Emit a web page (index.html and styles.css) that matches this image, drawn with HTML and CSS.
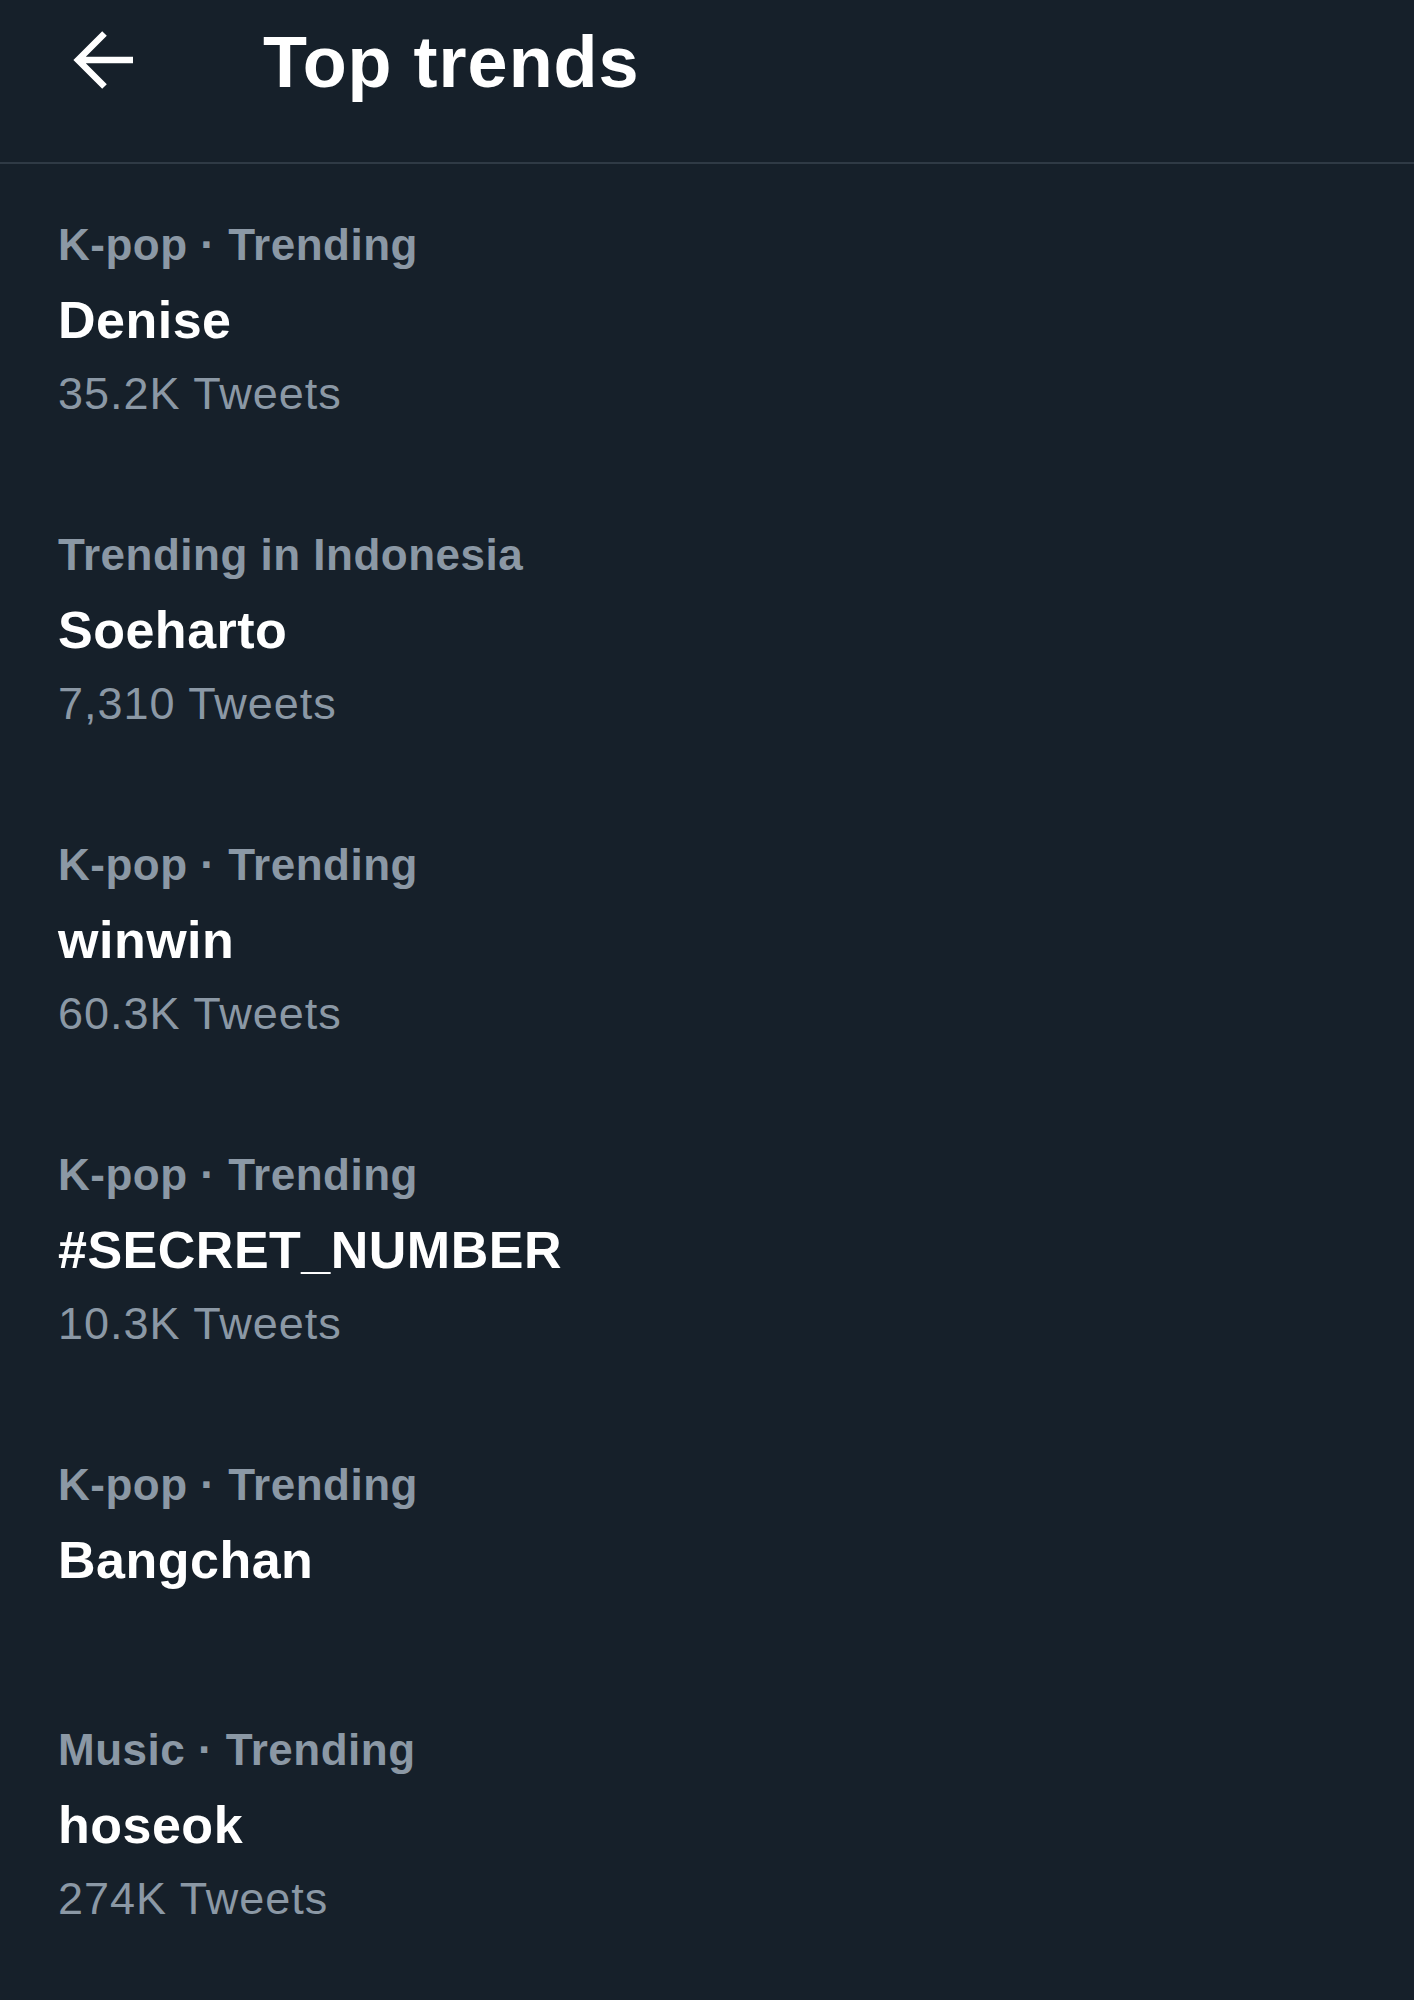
FILE: index.html
```html
<!DOCTYPE html>
<html>
<head>
  <meta charset="UTF-8">
  <title>Top trends</title>
  <link rel="stylesheet" href="styles.css">
</head>
<body>

  <header class="topbar">
    <a href="#" class="topbar__back" aria-label="Back">
      <svg width="66" height="64" viewBox="0 0 66 64">
        <path d="M63 32H8M34.5 5.5L8 32l26.5 26.5" fill="none" stroke="#fff" stroke-width="6.5" stroke-linejoin="miter"/>
      </svg>
    </a>
    <h1 class="topbar__title">Top trends</h1>
  </header>

  <div class="trends">
    <a href="#" class="trend">
      <div class="trend__meta">K-pop · Trending</div>
      <div class="trend__name">Denise</div>
      <div class="trend__count">35.2K Tweets</div>
    </a>
    <a href="#" class="trend">
      <div class="trend__meta">Trending in Indonesia</div>
      <div class="trend__name">Soeharto</div>
      <div class="trend__count">7,310 Tweets</div>
    </a>
    <a href="#" class="trend">
      <div class="trend__meta">K-pop · Trending</div>
      <div class="trend__name">winwin</div>
      <div class="trend__count">60.3K Tweets</div>
    </a>
    <a href="#" class="trend">
      <div class="trend__meta">K-pop · Trending</div>
      <div class="trend__name">#SECRET_NUMBER</div>
      <div class="trend__count">10.3K Tweets</div>
    </a>
    <a href="#" class="trend trend--short">
      <div class="trend__meta">K-pop · Trending</div>
      <div class="trend__name">Bangchan</div>
    </a>
    <a href="#" class="trend">
      <div class="trend__meta">Music · Trending</div>
      <div class="trend__name">hoseok</div>
      <div class="trend__count">274K Tweets</div>
    </a>
  </div>

</body>
</html>
```

FILE: styles.css
```css
body {
  margin: 0;
  min-height: 2000px;
  background: #16202a;
  color: #fff;
  font-family: "Liberation Sans", Arial, sans-serif;
}

.topbar {
  box-sizing: border-box;
  height: 164px;
  display: flex;
  align-items: flex-start;
  padding: 22px 0 0 70px;
  border-bottom: 2px solid #2f3a45;
}

.topbar__back {
  display: block;
  margin-top: 6px;
  line-height: 0;
}

.topbar__title {
  margin: 0 0 0 127px;
  font-size: 72px;
  line-height: 80px;
  font-weight: bold;
  letter-spacing: 1px;
}

.trend {
  display: block;
  padding: 51px 58px 50px;
  text-decoration: none;
  color: #fff;
}

.trend--short {
  padding-bottom: 70px;
}

.trend__meta {
  font-size: 44px;
  line-height: 60px;
  font-weight: bold;
  letter-spacing: 0.5px;
  color: #8b98a5;
}

.trend__name {
  margin-top: 6px;
  font-size: 52px;
  line-height: 78px;
  font-weight: bold;
  letter-spacing: 0.5px;
}

.trend__count {
  margin-top: 5px;
  font-size: 45px;
  line-height: 60px;
  letter-spacing: 1px;
  color: #8b98a5;
}
```
